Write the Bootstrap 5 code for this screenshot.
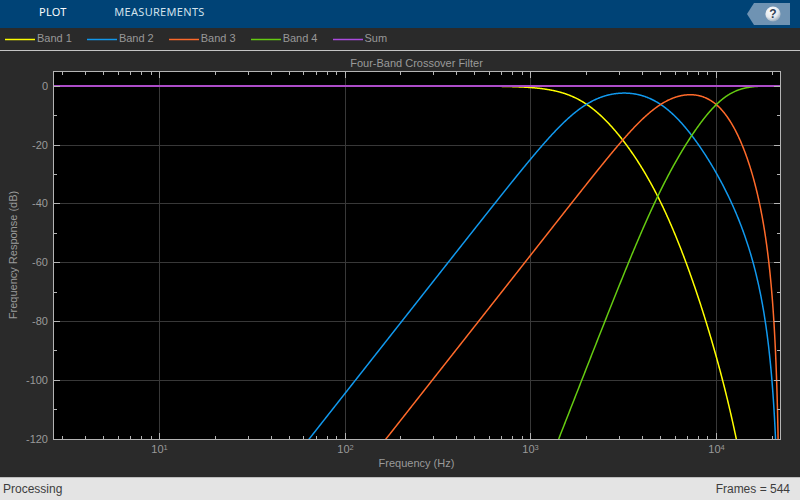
<!DOCTYPE html>
<html lang="en">
<head>
<meta charset="utf-8">
<title>Four-Band Crossover Filter</title>
<link href="https://cdn.jsdelivr.net/npm/bootstrap@5.3.0/dist/css/bootstrap.min.css" rel="stylesheet">
<style>
html,body{height:500px;overflow:hidden;background:#2a2a2a;font-family:"Liberation Sans",Arial,sans-serif}
.scope-toolbar{height:28px;background:#004376;color:#fff;font-family:"Noto Sans",sans-serif;font-size:11px;letter-spacing:.3px}
.scope-tab{padding-left:39px;padding-right:8.5px;padding-bottom:4px;opacity:.99}
.scope-tab-second{color:#d5e3ee}
.help-tag{width:43px;height:22px;background:#6f93b3;clip-path:polygon(7px 0,100% 0,100% 100%,7px 100%,0 50%);margin-right:10px;padding-left:9px}
.scope-legend{height:23px;background:#2a2a2a;border-bottom:1px solid #c4c4c4;color:#9a9a9a;font-size:11px;padding:0 0 2px 5px;gap:15px}
.legend-entry{opacity:.99}
.legend-swatch{display:block;margin-right:2px;margin-top:2px}
.plot-holder{height:426px;background:#2a2a2a}
.plot-svg{display:block}
.plot-svg text{font-family:"Liberation Sans",Arial,sans-serif;font-size:11px;fill:#9c9c9c;opacity:.99}
.scope-status{height:23px;background:#e4e4e4;border-top:1px solid #bdbdbd;color:#3c3c3c;font-size:12px;padding:0 10px 1px 3px}
.scope-status span{opacity:.99}
</style>
</head>
<body>
<div class="scope-toolbar d-flex justify-content-between align-items-center">
  <div class="d-flex">
    <span class="scope-tab">PLOT</span>
    <span class="scope-tab scope-tab-second">MEASUREMENTS</span>
  </div>
  <div class="help-tag d-flex align-items-center justify-content-center">
    <svg width="18" height="18" viewBox="0 0 18 18">
      <defs><radialGradient id="ball" cx="40%" cy="30%" r="75%"><stop offset="0" stop-color="#ffffff"/><stop offset=".6" stop-color="#e4e9ee"/><stop offset="1" stop-color="#8ba0b4"/></radialGradient></defs>
      <circle cx="9" cy="9" r="7.6" fill="url(#ball)"/>
      <text x="9" y="13.2" text-anchor="middle" font-family="Liberation Sans" font-weight="700" font-size="12" fill="#2f3f55">?</text>
    </svg>
  </div>
</div>
<div class="scope-legend d-flex align-items-center">
  <span class="legend-entry d-flex align-items-center"><svg class="legend-swatch" width="30" height="3"><line x1="0" y1="1.5" x2="30" y2="1.5" stroke="#ffff00" stroke-width="1.5"/></svg>Band 1</span>
  <span class="legend-entry d-flex align-items-center"><svg class="legend-swatch" width="30" height="3"><line x1="0" y1="1.5" x2="30" y2="1.5" stroke="#1199ee" stroke-width="1.5"/></svg>Band 2</span>
  <span class="legend-entry d-flex align-items-center"><svg class="legend-swatch" width="30" height="3"><line x1="0" y1="1.5" x2="30" y2="1.5" stroke="#ff6a2a" stroke-width="1.5"/></svg>Band 3</span>
  <span class="legend-entry d-flex align-items-center"><svg class="legend-swatch" width="30" height="3"><line x1="0" y1="1.5" x2="30" y2="1.5" stroke="#66cc11" stroke-width="1.5"/></svg>Band 4</span>
  <span class="legend-entry d-flex align-items-center"><svg class="legend-swatch" width="30" height="3"><line x1="0" y1="1.5" x2="30" y2="1.5" stroke="#ac4ce0" stroke-width="1.5"/></svg>Sum</span>
</div>
<div class="plot-holder">
  <svg id="plot" class="plot-svg" width="800" height="426" viewBox="0 51 800 426" xmlns="http://www.w3.org/2000/svg">
    <defs><clipPath id="axclip"><rect x="53.5" y="71.5" width="727" height="368"/></clipPath></defs>
    <rect x="53.5" y="71.5" width="727" height="368" fill="#000"/>
    <g id="grid"></g>
    <g id="curves" clip-path="url(#axclip)" fill="none" stroke-width="1.5"></g>
    <rect x="53.5" y="71.5" width="727" height="368" fill="none" stroke="#b4b4b4" stroke-width="1"/>
    <g id="ticks"></g>
    <text x="416.5" y="67" text-anchor="middle">Four-Band Crossover Filter</text>
    <text x="416.5" y="467" text-anchor="middle">Frequency (Hz)</text>
    <text transform="translate(17 255) rotate(-90)" text-anchor="middle">Frequency Response (dB)</text>
    <g id="labels"></g>
  </svg>
</div>
<div class="scope-status d-flex justify-content-between align-items-center">
  <span>Processing</span><span>Frames = 544</span>
</div>
<script>
(function(){
  var NS='http://www.w3.org/2000/svg';
  function el(p,n,a,t){var e=document.createElementNS(NS,n);for(var k in a)e.setAttribute(k,a[k]);if(t!=null)e.textContent=t;document.getElementById(p).appendChild(e);return e;}
  var X=function(f){return 159.5+185.6*(Math.log10(f)-1)};
  var Y=function(d){return 86-d*2.946};
  var P=function(d){return Math.floor(86.2-d*2.94)+.5};
  var fs=44100;
  function w(f){return Math.tan(Math.PI*f/fs)}
  function lp(f,c){var r=w(f)/w(c);return 1/(1+Math.pow(r,4))}
  function hp(f,c){var r=w(c)/w(f);return 1/(1+Math.pow(r,4))}
  var bands=[
    {c:'#ffff00',g:function(f){return lp(f,2000)*lp(f,5000)}},
    {c:'#1199ee',g:function(f){return hp(f,2000)*lp(f,5000)}},
    {c:'#ff6a2a',g:function(f){return hp(f,5000)*lp(f,10000)}},
    {c:'#66cc11',g:function(f){return hp(f,5000)*hp(f,10000)}}
  ];
  bands.forEach(function(b){
    var pts=[];
    for(var x=53.5;x<=780.5;x+=0.5){
      var f=Math.pow(10,1+(x-159.5)/185.6);
      if(f>=22050)f=22049;
      var db=20*Math.log10(b.g(f));
      pts.push(x.toFixed(1)+','+Y(Math.max(db,-140)).toFixed(2));
    }
    el('curves','polyline',{points:pts.join(' '),stroke:b.c});
  });
  el('curves','line',{x1:53.5,y1:86,x2:780.5,y2:86,stroke:'#ac4cc8','stroke-width':2});
  [1,2,3,4].forEach(function(e){var x=Math.floor(X(Math.pow(10,e)))+.5;
    el('grid','line',{x1:x,y1:72,x2:x,y2:439,stroke:'#383838'});
    el('ticks','line',{x1:x,y1:72,x2:x,y2:78,stroke:'#b4b4b4'});
    el('ticks','line',{x1:x,y1:439,x2:x,y2:433,stroke:'#b4b4b4'});
    var t=el('labels','text',{x:x,y:453,'text-anchor':'middle'});
    t.textContent='10';
    var s=document.createElementNS(NS,'tspan');s.setAttribute('dy','-3');s.style.fontSize='7.5px';s.textContent=e;t.appendChild(s);
  });
  [0,-20,-40,-60,-80,-100,-120].forEach(function(d){var y=P(d);
    if(d!==0&&d!==-120)el('grid','line',{x1:54,y1:y,x2:780,y2:y,stroke:'#383838'});
    if(d!==-120){el('ticks','line',{x1:54,y1:y,x2:60,y2:y,stroke:'#b4b4b4'});el('ticks','line',{x1:780,y1:y,x2:774,y2:y,stroke:'#b4b4b4'});}
    el('labels','text',{x:48,y:y+3.5,'text-anchor':'end'},String(d));
    if(d!==-120){var m=P(d-10);el('ticks','line',{x1:54,y1:m,x2:57,y2:m,stroke:'#b4b4b4'});el('ticks','line',{x1:780,y1:m,x2:777,y2:m,stroke:'#b4b4b4'});}
  });
  for(var e=0;e<5;e++){for(var k=2;k<10;k++){var f=k*Math.pow(10,e),px=Math.floor(X(f))+.5;
    if(px<55||px>779)continue;
    el('ticks','line',{x1:px,y1:72,x2:px,y2:75,stroke:'#b4b4b4'});
    el('ticks','line',{x1:px,y1:439,x2:px,y2:436,stroke:'#b4b4b4'});
  }}
})();
</script>
<script src="https://cdn.jsdelivr.net/npm/bootstrap@5.3.0/dist/js/bootstrap.bundle.min.js"></script>
</body>
</html>
